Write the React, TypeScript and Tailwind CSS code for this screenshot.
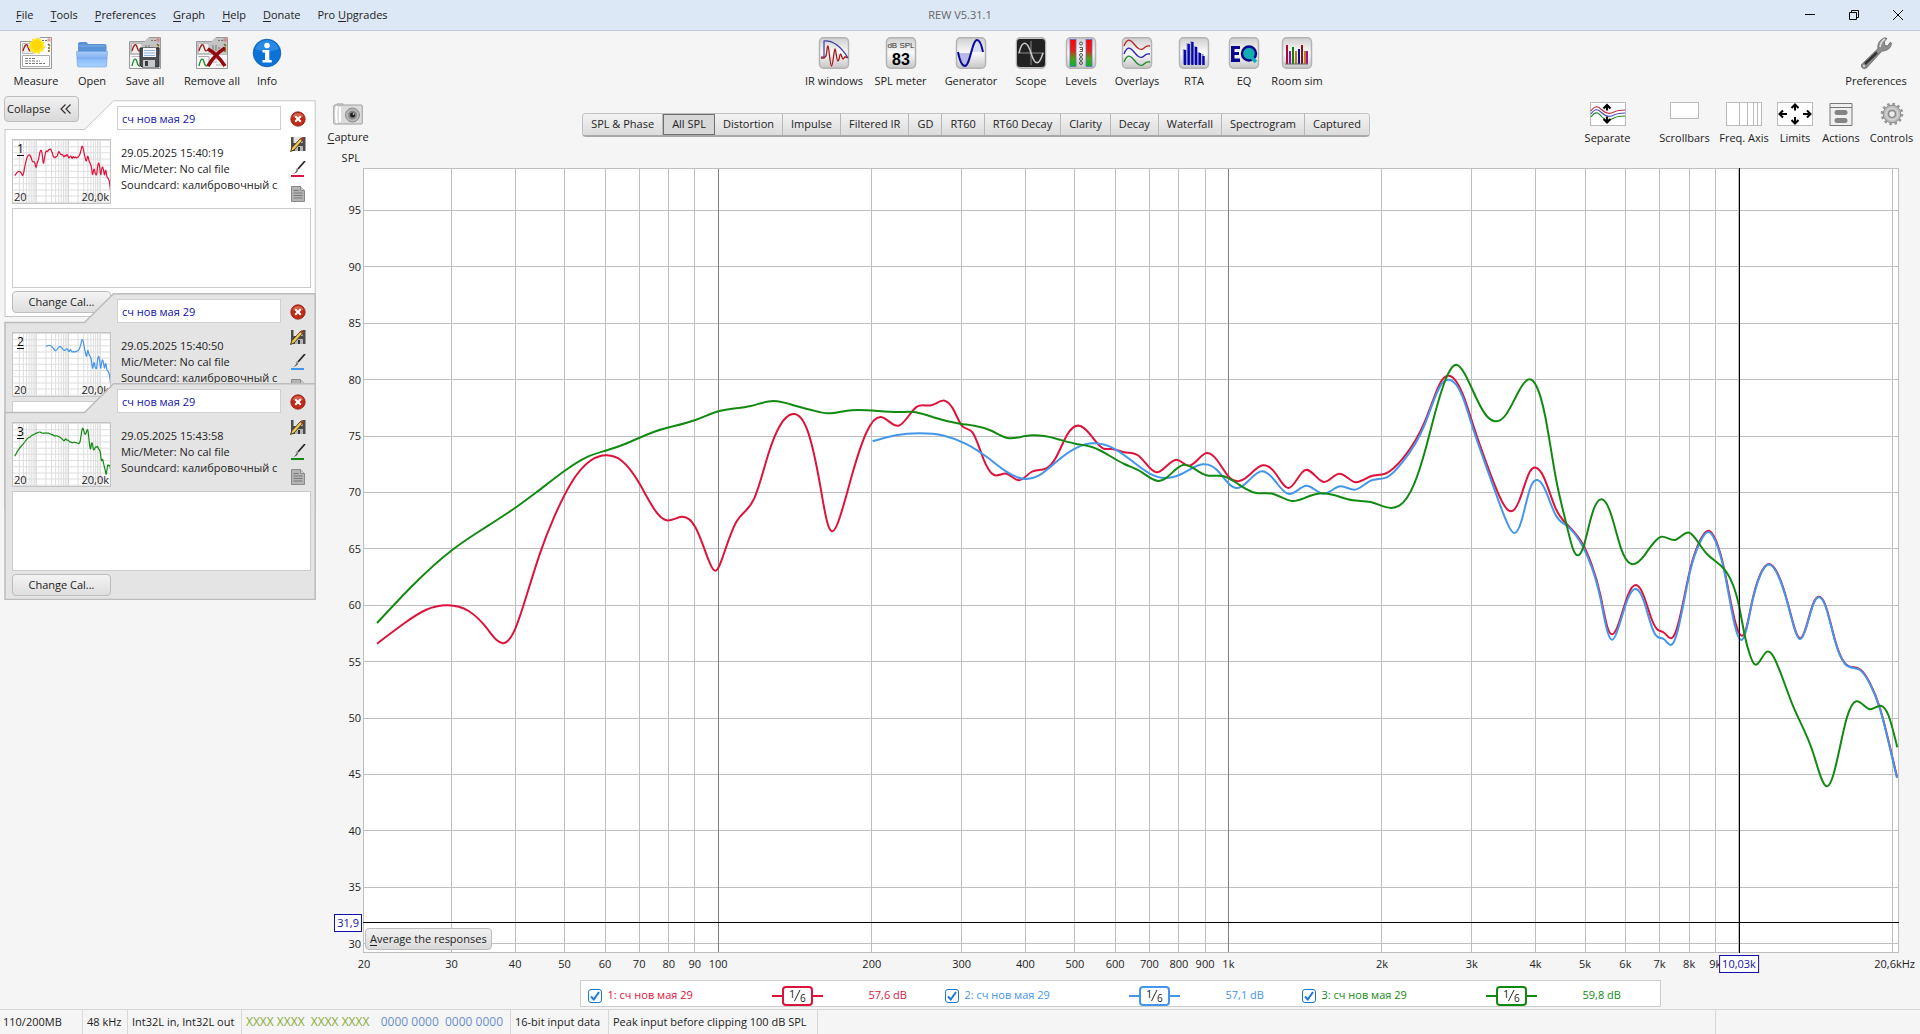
import React, { useState } from 'react';

const RED = '#dc143c';
const BLUE = '#4496ea';
const GREEN = '#128a12';

// the plot canvas the curves were laid out on
const PLOT = { x: 363, y: 168, w: 1536, h: 785 };

const fx = (hz: number) => 718.2 + 510.2 * (Math.log10(hz) - 2);
const dy = (db: number) => 210.4 + (95 - db) * 11.28;

// smoothed responses as x,y pairs on the plot canvas
const redCurve = '377,643.7 404.3,623.3 425.7,610 447.9,605.3 468.6,611 486.4,627.7 504.3,643 515.4,628.3 525.7,598.3 540,553.3 554.3,516.7 572,481.7 590,461 606.8,455.3 622,461 639.3,483.3 656,511.7 666.4,520.3 681.8,516.7 695.4,527.3 707.9,558.3 715.4,570.7 724,553.3 736.4,521.7 754.3,498.3 768.6,453.3 779.3,426.7 792.9,414 807.9,431.7 820.4,486.7 827.5,523.3 832,531.3 840,516.7 852.5,473.3 866.8,431.7 881,417 898.6,425.7 917,406.7 931.4,405.3 944.6,400.7 954.6,411.7 961.8,425.7 972.5,432.3 983.2,458.3 994,475 1006.4,473.7 1019,480.3 1031.4,472 1045.7,468.7 1056.4,456.7 1067,435 1080.4,426 1092,436.7 1102.9,448.3 1111.8,449 1124.3,452.3 1138.6,455.7 1156.4,472.3 1176.8,459.7 1189,465.7 1206.4,453 1217,460 1229.6,477.7 1239.3,481 1249.3,475 1262.5,465.3 1276,474 1288.6,488 1304.6,470.3 1324,482 1339,473.7 1354.6,482 1370.7,476.3 1385,473.7 1402.9,458.3 1424.8,421.7 1435,395 1442,380 1448.9,375.7 1456.4,381.7 1464.4,398.3 1472.6,423.3 1490.2,473.3 1504,505 1510.9,511.3 1519.5,500 1529.8,471.7 1536,467.7 1543.6,476.7 1555.6,508.3 1566.6,524 1583.2,545 1591.8,565 1600.4,595 1607.3,626.7 1612.4,634.3 1619.3,621.7 1628,595 1636.2,585 1643.4,595 1652,620 1657.2,629.3 1664,632.7 1672,638 1677.9,625 1690,570 1700.3,540 1708.2,530.7 1715.7,540 1724.4,570 1734.7,620 1741.5,635.6 1745.7,630 1751.7,603.3 1760,575 1769,564 1778.3,575 1788.3,605 1795,629.3 1800,638.3 1806.7,625 1813.3,603.3 1818.7,596.7 1825,604 1835,640 1845,663.3 1860,669.3 1870,683.3 1880,708.3 1888.3,740 1897,776.7';

const blueCurve = '872.5,441.3 895.7,435.3 919,433.3 944,435.7 967,444.3 988.6,458.3 1006.4,471.7 1025.4,479 1038.6,475.7 1056.4,461.7 1075.4,448.3 1094,443.3 1115.4,449.3 1135,463.3 1149.3,473.3 1165.4,478 1181.4,474 1202.9,464.3 1217,470 1227.9,482.7 1236.8,488 1247.5,481.7 1262,471.3 1274.3,480 1288.6,494 1306.4,485.7 1323,493.7 1340.4,486.3 1354.6,489.7 1370.7,480.7 1386.8,477.3 1402.9,461.7 1424.8,424.3 1435,397.3 1442,383.3 1448.9,379.7 1456.4,385 1464.4,401.7 1472.6,427.3 1483.3,458.3 1497,496.7 1507.4,523.3 1514.3,533 1521.2,521.7 1530.8,486.7 1537.4,480 1545.3,490 1555.6,515 1566.6,525.7 1583.2,547.3 1591.8,567.3 1600.4,598.3 1607.3,631 1612.4,639.7 1619.3,625 1628,598.3 1636.2,589 1643.4,600 1652,627.3 1656.5,636 1664,639.3 1671.7,644.7 1677.9,630 1690,571.7 1700.3,541.7 1708.2,532 1715.7,541.7 1724.4,571.7 1734.7,625 1741,640 1745.7,632 1751.7,604.3 1760,576 1769,564.6 1778.3,576 1788.3,606 1795,630.3 1800,639.3 1806.7,626 1813.3,604.3 1818.7,597.3 1825,605 1835,641 1845,664 1860,670 1870,684 1880,709 1888.3,741 1897,778';

const greenCurve = '377,623 411.4,586.7 452.5,549.7 482.9,529 515.4,507.7 536.4,492.3 565.4,470.3 586.4,457.3 605.4,450.7 625.7,443.7 654.3,431.7 669.3,427.3 695.4,420 718.6,411.3 750.7,406 773.2,401 797,406.3 811.4,410 828.2,413.3 847,410.7 857.9,410 900,412 913.6,412 935,417.7 960,423.7 974.3,425.7 992,431 1007.5,438 1025.4,436 1056.4,438.7 1075.4,443.7 1092,447 1124.3,464 1142,472.3 1159,481 1167,477.3 1184,464.7 1192,467.3 1206.4,475.3 1222.5,476 1238.6,484.3 1256.4,493 1272.5,493.7 1292,501 1306.4,497.3 1322.5,493.3 1353,500.3 1370.7,502 1391,508 1399.3,505.7 1414.4,483.3 1424.8,451.7 1435,413.3 1445.4,380 1456.4,364.7 1464.4,373.3 1476.4,398.3 1486.7,416 1495.4,421.3 1505.7,415 1517.7,393.3 1529.4,379.3 1536.7,386.7 1545.3,416.7 1555.6,476.7 1566.6,525 1572.8,548.3 1578.3,555.3 1583.2,547.3 1591.8,515 1601.8,499.3 1610.7,513.3 1621,548.3 1630.7,563.7 1645.2,554.3 1661.3,536.7 1675,540 1689.2,532.7 1698.5,542.7 1707,554 1724.4,569.3 1733,585 1739.2,606.7 1745,636.7 1750,655 1754,663.7 1767,651.7 1776.7,663.3 1793.3,706.7 1813.3,753.3 1827.3,786.3 1833.3,775 1846.7,718.3 1856.3,701.3 1870,709.3 1881,705.7 1888.3,715 1897.3,747.3';

// natural cubic spline through the points, written as bezier segments
const toPath = (s: string) => {
  const p = s.split(' ').map((t) => t.split(',').map(Number));
  const n = p.length;
  const h = p.slice(1).map((q, i) => q[0] - p[i][0]);
  const g = p.slice(1).map((q, i) => (q[1] - p[i][1]) / h[i]);
  // second derivatives, tridiagonal solve
  const c = new Array(n).fill(0);
  const r = new Array(n).fill(0);
  for (let i = 1; i < n - 1; i++) {
    const den = 2 * (h[i - 1] + h[i]) - h[i - 1] * c[i - 1];
    c[i] = h[i] / den;
    r[i] = (6 * (g[i] - g[i - 1]) - h[i - 1] * r[i - 1]) / den;
  }
  const z = new Array(n).fill(0);
  for (let i = n - 2; i > 0; i--) z[i] = r[i] - c[i] * z[i + 1];
  let d = `M${p[0][0]},${p[0][1]}`;
  for (let i = 0; i < n - 1; i++) {
    const m0 = g[i] - (h[i] * (2 * z[i] + z[i + 1])) / 6;
    const m1 = g[i] + (h[i] * (z[i] + 2 * z[i + 1])) / 6;
    const k = h[i] / 3;
    d += `C${p[i][0] + k},${p[i][1] + m0 * k} ${p[i + 1][0] - k},${p[i + 1][1] - m1 * k} ${p[i + 1][0]},${p[i + 1][1]}`;
  }
  return d;
};

const traces = [
  { id: 1, name: 'сч нов мая 29', time: '29.05.2025 15:40:19', level: '57,6 dB', color: RED, path: toPath(redCurve) },
  { id: 2, name: 'сч нов мая 29', time: '29.05.2025 15:40:50', level: '57,1 dB', color: BLUE, path: toPath(blueCurve) },
  { id: 3, name: 'сч нов мая 29', time: '29.05.2025 15:43:58', level: '59,8 dB', color: GREEN, path: toPath(greenCurve) },
];

const freqs = [30, 40, 50, 60, 70, 80, 90, 100, 200, 300, 400, 500, 600, 700, 800, 900, 1000, 2000, 3000, 4000, 5000, 6000, 7000, 8000, 9000, 10000, 20000];
const levels = [95, 90, 85, 80, 75, 70, 65, 60, 55, 50, 45, 40, 35, 30];

const Grid = ({ color, strong }: { color: string; strong: string }) => (
  <g shapeRendering="crispEdges" fill="none">
    {levels.map((l) => (
      <path key={l} d={`M300 ${dy(l)}H1899`} stroke={color} vectorEffect="non-scaling-stroke" />
    ))}
    {freqs.map((f) => (
      <path key={f} d={`M${fx(f)} 168V953`} stroke={f === 100 || f === 1000 ? strong : color} vectorEffect="non-scaling-stroke" />
    ))}
  </g>
);

/* ---------- toolbar icons ---------- */

const Tile = ({ children }: { children: React.ReactNode }) => (
  <svg width="32" height="32" viewBox="0 0 32 32" fill="none">
    <defs>
      <linearGradient id="tile" x1="0" y1="0" x2="0" y2="1">
        <stop offset="0" stopColor="#cfcfcf" />
        <stop offset=".5" stopColor="#fafafa" />
        <stop offset="1" stopColor="#c6c6c6" />
      </linearGradient>
    </defs>
    <rect x="1.5" y=".75" width="29" height="30.5" rx="4" fill="url(#tile)" stroke="#b4b4b4" strokeWidth="1.5" />
    {children}
  </svg>
);

const FolderPage = ({ shade, children }: { shade: string; children: React.ReactNode }) => (
  <svg width="32" height="32" viewBox="0 0 32 32" fill="none">
    <path d="M.5 31.5V4.500H16L20 .5H31.500V31.500Z" fill="#f7f7f7" stroke="#999" />
    <path d="M1 5H16L20 1H31V18H1Z" fill={shade} />
    <path d="M2.500 6.500H13V16.500H2.500Z" fill="#eee" stroke="#bbb" />
    <path d="M3 14C5 7 7 6 8 10S10 16 13 11" stroke="#a51c1c" strokeWidth="1.3" />
    <path d="M16 9h5M16 11h8M16 13h6M22 3.500h5" stroke="#777" strokeDasharray="2 1" />
    <rect x="28" y="2" width="2" height="2" stroke="#d66" strokeWidth=".8" />
    <path d="M28 7l2 2M28 14h2M28 11h2" stroke="#7a6500" strokeWidth="1.5" />
    {children}
  </svg>
);

const MeasureIcon = () => (
  <FolderPage shade="#fafafa">
    <path d="M2.500 18.500H29.500V29.500H2.500Z" fill="#fff" stroke="#aaa" />
    <path d="M5 21.500h11M5 24h15M5 26.500h20" stroke="#777" strokeDasharray="3 1 2 1" />
    <path d="M16.500 0l1.800 2.600 3-1.200.3 3.200 3.100.5-1.400 2.800 2.300 2.100-2.800 1.500.7 3.100-3.200-.2-1.300 2.900-2.500-1.900-2.500 1.900-1-3-3.200.2.800-3.100L7.800 10l2.400-2.100L8.900 5l3.200-.5.2-3.200 3 1.300Z" fill="#ffe51a" />
    <circle cx="16.500" cy="8" r="5.200" fill="#ffd700" />
  </FolderPage>
);

const OpenIcon = () => (
  <svg width="32" height="32" viewBox="0 0 32 32">
    <defs>
      <linearGradient id="folder" x1="0" y1="0" x2="0" y2="1">
        <stop offset="0" stopColor="#a9ccf8" />
        <stop offset=".45" stopColor="#7fb0f0" />
        <stop offset=".55" stopColor="#8fc0fa" />
        <stop offset="1" stopColor="#a8d2ff" />
      </linearGradient>
    </defs>
    <path d="M2 15V7q0-2 2-2h6q1 0 2 2h17q1.500 0 1.500 1.500V16Z" fill="#5c93d6" />
    <path d="M3 9h26" stroke="#7eaee6" />
    <path d="M.5 14.500h31L30.500 29q0 1-1.500 1H3q-1.500 0-1.500-1Z" fill="url(#folder)" stroke="#6d9fe0" strokeWidth=".6" />
  </svg>
);

const SaveAllIcon = () => (
  <FolderPage shade="#c4c4c4">
    <path d="M2.500 19.500H13V30" stroke="#bbb" />
    <path d="M3 29C5 20 7 21 8 25s2 5 5 3" stroke="#178a2b" strokeWidth="1.300" />
    <path d="M11 11h19v19H13l-2-2Z" fill="#4a4c50" stroke="#2d2d2d" />
    <rect x="14" y="11" width="13" height="9" fill="#f3f6fa" />
    <path d="M15 13.500h11M15 16h11M15 18.500h11" stroke="#8fb0d8" />
    <rect x="14" y="23" width="12" height="7" fill="#c5c8cc" />
    <rect x="16" y="24" width="3" height="5" fill="#3a3c40" />
  </FolderPage>
);

const RemoveAllIcon = () => (
  <FolderPage shade="#c4c4c4">
    <path d="M2.500 19.500H13V30M18 22h8M17 25h4M20 28h6" stroke="#aaa" />
    <path d="M3 29C5 20 7 21 8 25s2 5 5 3" stroke="#178a2b" strokeWidth="1.300" />
    <path d="M12 12q9 5 17 17M29 11q-10 6-17 18" stroke="#96090f" strokeWidth="3.600" />
  </FolderPage>
);

const InfoIcon = () => (
  <svg width="32" height="32" viewBox="0 0 32 32">
    <circle cx="16" cy="16" r="13.800" fill="#0b72d8" stroke="#0558ad" strokeWidth=".8" />
    <path d="M4 12a12.500 12.500 0 0 1 24 0q-12 5-24 0" fill="#3c9bee" opacity=".6" />
    <circle cx="16" cy="8.500" r="2.800" fill="#fff" />
    <path d="M11.500 13h6.800v10h2.400v2.600h-9.200V23h2.500v-7.400h-2.500Z" fill="#fff" />
  </svg>
);

const IrIcon = () => (
  <Tile>
    <path d="M3 20h3V4q13-1 24 17" stroke="#3a3aa8" strokeWidth="1.200" />
    <path d="M3 21h3l2-2c1-4 1-10 2-10s2 20 3.500 20S16 12 17 12s1.500 12 3 12 1.500-7 2.500-7 1.500 5 2.500 5 1.500-3 2.500-2l2 1" stroke="#a01818" strokeWidth="1.300" />
  </Tile>
);

const SplIcon = () => (
  <Tile>
    <text x="16" y="11" textAnchor="middle" fontSize="8" fontFamily="Liberation Sans" fill="#333">dB SPL</text>
    <text x="16" y="28" textAnchor="middle" fontSize="16" fontWeight="700" fontFamily="Liberation Sans" fill="#000">83</text>
  </Tile>
);

const GeneratorIcon = () => (
  <Tile>
    <path d="M3 16h13C14 24 12 29 10 29S5 25 3 16Z" fill="#b9b9e6" />
    <path d="M16 15C18 8 20 3 22 3s4 4 6 12Z" fill="#dcdcf4" />
    <path d="M3 15C5 25 7 29 10 29 15 29 17 3 22 3c3 0 5 7 6 12" stroke="#0a0a9a" strokeWidth="2" />
  </Tile>
);

const ScopeIcon = () => (
  <Tile>
    <rect x="2" y="2" width="28" height="28" rx="3" fill="#222" />
    <path d="M3 16h26M16 4v24" stroke="#8a8a8a" />
    <path d="M4 16C7 3 12 3 16 16s8 13 12 0" stroke="#ccc" strokeWidth="1.500" />
  </Tile>
);

const LevelsIcon = () => (
  <Tile>
    <defs>
      <linearGradient id="level" x1="0" y1="0" x2="0" y2="1">
        <stop offset="0" stopColor="#f00" />
        <stop offset=".4" stopColor="#e82018" />
        <stop offset=".7" stopColor="#50a010" />
        <stop offset="1" stopColor="#00b828" />
      </linearGradient>
    </defs>
    <rect x="5" y="2.500" width="6" height="27" fill="url(#level)" stroke="#6a6ac0" strokeWidth=".8" />
    <rect x="21" y="2.500" width="6" height="27" fill="url(#level)" stroke="#6a6ac0" strokeWidth=".8" />
    <g stroke="#444" strokeWidth=".9">
      <circle cx="16" cy="6.500" r="1.500" />
      <path d="M14.500 10.500h3v4h-3M15 12.500h2" />
      <circle cx="16" cy="18" r="1.500" />
      <circle cx="16" cy="22" r="1.500" />
      <circle cx="16" cy="26" r="1.500" />
    </g>
  </Tile>
);

const OverlaysIcon = () => (
  <Tile>
    <g strokeWidth="1.300">
      <path d="M3 9C6 1 9 2 13 7s7 7 10 4 4-2 6-2" stroke="#b82525" />
      <path d="M3 17c3-8 6-7 10-2s7 7 10 4 4-2 6-2" stroke="#2323b0" />
      <path d="M3 25c3-8 6-7 10-2s7 7 10 4 4-2 6-2" stroke="#1f8a2a" />
    </g>
  </Tile>
);

const RtaIcon = () => (
  <Tile>
    <path d="M7 28V13M10.700 28V7M14.400 28V5M18.100 28V10M21.800 28V16M25.500 28V18" stroke="#9c9cdd" strokeWidth="2.400" transform="translate(-1 -1)" />
    <path d="M7 28V13M10.700 28V7M14.400 28V5M18.100 28V10M21.800 28V16M25.500 28V19" stroke="#0808a8" strokeWidth="2.400" />
  </Tile>
);

const EqIcon = () => (
  <Tile>
    <path d="M3 9h9v3H6.500v3H11v3H6.500v3.500H12V25H3Z" fill="#08088c" />
    <circle cx="21" cy="16.500" r="7" fill="#12aeb4" stroke="#08088c" strokeWidth="2.500" />
    <path d="M22 19l6 6" stroke="#12aeb4" strokeWidth="3.500" />
  </Tile>
);

const RoomIcon = () => (
  <Tile>
    <g strokeWidth="2">
      <path d="M6 27V8" stroke="#a01030" />
      <path d="M9 27V14" stroke="#a010a0" />
      <path d="M12 27V10" stroke="#108010" />
      <path d="M15 27V14" stroke="#b08010" />
      <path d="M18 27V12" stroke="#1010a0" />
      <path d="M21 27V8" stroke="#901010" />
      <path d="M24 27V14" stroke="#c08010" />
      <path d="M26 27V14" stroke="#a010a0" />
    </g>
    <path d="M4 27h23" stroke="#666" />
  </Tile>
);

const WrenchIcon = () => (
  <svg width="32" height="32" viewBox="0 0 32 32">
    <path d="M1.500 27.500L18 11.500C17 7 20 2 25 .8L27 1.500 24.500 4.500V8l3 1L30.500 5l1 1.500C31 11 27.500 14 22 14L6.500 31Q3 33 1.500 30Z" fill="#8d8d8d" stroke="#5b5b5b" strokeWidth=".7" />
    <path d="M5 27L17 15.500" stroke="#333" strokeWidth="2.500" />
    <path d="M20 10q1-6 5-8" stroke="#dedede" strokeWidth="1.600" fill="none" />
    <circle cx="4" cy="29" r="1.400" fill="#f5f5f5" stroke="#666" strokeWidth=".6" />
  </svg>
);

const CameraIcon = () => (
  <svg width="30" height="22" viewBox="0 0 30 22">
    <rect x="4" y="0" width="6" height="3" rx="1" fill="#d5d5d5" stroke="#aaa" strokeWidth=".6" />
    <rect x=".75" y="2" width="28.500" height="19" rx="1" fill="#dcdcdc" stroke="#9d9d9d" />
    <path d="M4 3q-2 9 0 17M7 4v15" stroke="#fff" strokeWidth="2" fill="none" />
    <circle cx="19.500" cy="12" r="7" fill="#b7b7b7" stroke="#8a8a8a" />
    <circle cx="19.500" cy="12" r="4.500" fill="#8a8a8a" />
    <circle cx="19.500" cy="12" r="2.500" fill="#222" />
    <circle cx="20.500" cy="11" r=".8" fill="#fff" />
  </svg>
);

const SeparateIcon = () => (
  <svg width="36" height="24" viewBox="0 0 36 24" fill="none">
    <rect x=".5" y=".5" width="35" height="23" fill="#fff" stroke="#bbb" />
    <path d="M1 9c4-6 7-5 11-1s8 4 12 2 7-2 11-2" stroke="#c03040" strokeWidth="1.200" />
    <path d="M1 12c4-6 7-5 11-1s8 4 12 2 7-2 11-2" stroke="#5050c0" strokeWidth="1.200" />
    <path d="M1 15c4-6 7-5 11 0s8 3 12 1 7-2 11-2" stroke="#209030" strokeWidth="1.200" />
    <path d="M17 8.500V3M13.500 6.500L17 3l3.500 3.500M17 14.500v6M13.500 17l3.500 3.500 3.500-3.500" stroke="#000" strokeWidth="2.200" />
  </svg>
);

const ScrollbarsIcon = () => (
  <svg width="30" height="24" viewBox="0 0 30 24">
    <rect x=".5" y=".5" width="28" height="16" fill="#fff" stroke="#bbb" />
  </svg>
);

const FreqAxisIcon = () => (
  <svg width="36" height="24" viewBox="0 0 36 24" shapeRendering="crispEdges">
    <path d="M.5 .5h35v23h-35ZM13.500 1v22M21.500 1v22M27.500 1v22M31.500 1v22" fill="#fff" stroke="#bbb" />
  </svg>
);

const LimitsIcon = () => (
  <svg width="36" height="24" viewBox="0 0 36 24" fill="none">
    <rect x=".5" y=".5" width="35" height="23" fill="#fff" stroke="#bbb" />
    <path d="M18 8.500V3M14.500 6L18 2.500 21.500 6M18 15v6M14.500 18l3.500 3.500 3.500-3.500M10 12H3M6 8.500L2.500 12 6 15.500M26 12h7M30 8.500l3.500 3.500-3.500 3.500" stroke="#000" strokeWidth="2" />
  </svg>
);

const ActionsIcon = () => (
  <svg width="24" height="24" viewBox="0 0 24 24">
    <path d="M1 1.500h22v22H1ZM1 5.500h22" fill="#f0f0f0" stroke="#777" />
    <rect x="5.500" y="8" width="13" height="5" rx="2.500" fill="#858585" />
    <rect x="5.500" y="16" width="13" height="5" rx="2.500" fill="#858585" />
  </svg>
);

const ControlsIcon = () => (
  <svg width="24" height="24" viewBox="0 0 24 24" fill="none">
    <circle cx="12" cy="12" r="10" stroke="#999" strokeWidth="2.600" strokeDasharray="2.600 2.640" />
    <circle cx="12" cy="12" r="8.800" fill="#bdbdbd" stroke="#8c8c8c" />
    <circle cx="12" cy="12" r="6" stroke="#dedede" />
    <circle cx="12" cy="12" r="3.400" fill="#ededed" stroke="#888" strokeWidth="1.400" />
  </svg>
);

/* ---------- measurement card icons ---------- */

const DeleteIcon = () => (
  <svg width="16" height="16" viewBox="0 0 16 16">
    <circle cx="8" cy="8" r="7.200" fill="#c22a18" stroke="#8c1a10" strokeWidth=".8" />
    <path d="M2.500 5.500a6 6 0 0 1 11 0q-5.500 2-11 0" fill="#e88070" opacity=".6" />
    <path d="M5.200 5.200l5.600 5.600M10.800 5.200l-5.600 5.600" stroke="#fff" strokeWidth="2" />
  </svg>
);

const SaveIcon = () => (
  <svg width="16" height="16" viewBox="0 0 16 16">
    <path d="M1 1h14.500v14H1Z" fill="#4c4c4c" />
    <path d="M3.500 1h9v6h-9Z" fill="#e4e4e4" />
    <path d="M5 10h8v5H5Z" fill="#b5b5b5" />
    <path d="M8 11h2v4H8Z" fill="#333" />
    <path d="M.5 15.500L2 11.500 11 2l2 2-9 10Z" fill="#f0cb55" stroke="#3c3010" strokeWidth=".9" />
    <path d="M10 3l2-2 2 2-2 2Z" fill="#a33d20" />
  </svg>
);

const PenIcon = ({ color }: { color: string }) => (
  <svg width="16" height="16" viewBox="0 0 16 16">
    <path d="M15 0L8 8" stroke="#222" strokeWidth="1.700" />
    <path d="M8 7.500L6.500 9.500" stroke="#999" strokeWidth="2.200" />
    <path d="M7 9l1 1q-2 3-5 3 2-1 4-4" fill="#555" />
    <path d="M1 15h13" stroke={color} strokeWidth="2" />
  </svg>
);

const NotesIcon = () => (
  <svg width="16" height="16" viewBox="0 0 16 16">
    <path d="M1.500.5h9l4 4v11h-13Z" fill="#b4b4b4" stroke="#8a8a8a" />
    <path d="M10.500.5v4h4" fill="#d4d4d4" stroke="#8a8a8a" />
    <path d="M3.500 4.500h5M3.500 7h9M3.500 9.500h9M3.500 12h9" stroke="#7a7a7a" />
  </svg>
);

const ToolButton = ({ icon, label, width }: { icon: React.ReactNode; label: string; width: string }) => (
  <button className={`flex shrink-0 flex-col items-center whitespace-nowrap ${width}`}>
    {icon}
    <span className="mt-1 leading-4">{label}</span>
  </button>
);

const MeasurementCard = ({ trace, active, overlap }: { trace: (typeof traces)[0]; active: boolean; overlap: string }) => {
  const [name, setName] = useState(trace.name);
  return (
    <section className={`relative w-[312px] shrink-0 pb-1 pl-2 ${overlap}`}>
      {/* folder outline with the slanted tab */}
      <svg className="absolute inset-0 size-full" viewBox="0 0 312 217" preserveAspectRatio="none">
        <path
          d="M1 216.500V29.500H80.500L109.500 .800H311.200V216.500Z"
          fill={active ? '#ffffff' : '#e4e4e4'}
          stroke={active ? '#c6c6c6' : '#bcbcbc'}
          strokeWidth={active ? 1 : 1.5}
        />
      </svg>
      <div className="relative flex h-[104px]">
        <div className="relative mt-[39px] h-[65px] w-[99px] shrink-0 overflow-hidden border border-[#c4c4c4] bg-white">
          <svg className="absolute inset-0 size-full" viewBox="350 319 1538 575" preserveAspectRatio="none">
            <Grid color="#dedede" strong="#d2d2d2" />
            <path d={trace.path} fill="none" stroke={trace.color} vectorEffect="non-scaling-stroke" strokeWidth="1.2" />
          </svg>
          <span className="absolute left-1 top-px text-xs leading-4 text-black underline underline-offset-2">{trace.id}</span>
          <span className="absolute bottom-0 left-px leading-3">20</span>
          <span className="absolute bottom-0 right-px leading-3">20,0k</span>
        </div>
        <div className="ml-1.5 w-[164px] shrink-0 overflow-hidden pt-1.5">
          <input
            aria-label={`Name ${trace.id}`}
            value={name}
            onChange={(e) => setName(e.target.value)}
            className="block h-6 w-full border border-[#d0d0d0] bg-white px-1 text-[#1010b0] outline-none"
          />
          <div className="mt-[15px] whitespace-nowrap pl-1 leading-4">
            <p>{trace.time}</p>
            <p>Mic/Meter: No cal file</p>
            <p>Soundcard: калибровочный с</p>
          </div>
        </div>
        <div className="flex w-[34px] flex-col items-center gap-[9px] pt-[11px]">
          <button aria-label="Delete"><DeleteIcon /></button>
          <button aria-label="Save"><SaveIcon /></button>
          <button aria-label="Trace colour"><PenIcon color={trace.color} /></button>
          <button aria-label="Notes"><NotesIcon /></button>
        </div>
      </div>
      <textarea
        aria-label={`Notes ${trace.id}`}
        className="relative mt-1 block h-20 w-[299px] resize-none border border-[#cccccc] bg-white p-1 outline-none"
      />
      <button className="relative mt-[3px] block h-[22px] w-[99px] rounded border border-[#bdbdbd] bg-gradient-to-b from-[#f4f4f4] to-[#dedede]">
        Change Cal...
      </button>
    </section>
  );
};

const LegendItem = ({ trace }: { trace: (typeof traces)[0] }) => {
  const [on, setOn] = useState(true);
  return (
    <div className="flex w-[357px] items-center" style={{ color: trace.color }}>
      <label className="flex w-[184px] items-center gap-1.5">
        <span className="relative size-[14px]">
          <input
            type="checkbox"
            checked={on}
            onChange={() => setOn(!on)}
            className="block size-[14px] appearance-none rounded-[3px] border border-[#1b78c8] bg-white"
          />
          {on && (
            <svg className="pointer-events-none absolute inset-0" width="14" height="14" viewBox="0 0 14 14" fill="none">
              <path d="M3 7.500l2.800 3L11 3" stroke="#1b78d8" strokeWidth="2" />
            </svg>
          )}
        </span>
        {trace.id}: {trace.name}
      </label>
      <button aria-label="Smoothing" className="h-[22px] w-[51px]">
        <svg width="51" height="22" viewBox="0 0 51 22" fill="none">
          <path d="M0 11h51" stroke={trace.color} strokeWidth="2" />
          <rect x="11" y="2" width="29" height="18" rx="3" fill="#fff" stroke={trace.color} strokeWidth="2" />
          <path d="M22.500 16L28 5" stroke="#222" />
          <text x="17" y="13" fontSize="11" fontFamily="Open Sans" fill="#222">1</text>
          <text x="28" y="17" fontSize="10" fontFamily="Open Sans" fill="#222">6</text>
        </svg>
      </button>
      <span className="ml-[46px]">{trace.level}</span>
    </div>
  );
};

const axisText = (f: number) => (f >= 1000 ? `${f / 1000}k` : `${f}`);

const tabs = ['SPL & Phase', 'All SPL', 'Distortion', 'Impulse', 'Filtered IR', 'GD', 'RT60', 'RT60 Decay', 'Clarity', 'Decay', 'Waterfall', 'Spectrogram', 'Captured'];

const menus = [
  ['', 'F', 'ile'],
  ['', 'T', 'ools'],
  ['', 'P', 'references'],
  ['', 'G', 'raph'],
  ['', 'H', 'elp'],
  ['', 'D', 'onate'],
  ['Pro ', 'U', 'pgrades'],
];

const left = (x: number) => ({ left: `${((x - PLOT.x) / PLOT.w) * 100}%` });
const top = (y: number) => ({ top: `${((y - PLOT.y) / PLOT.h) * 100}%` });

const App: React.FC = () => {
  const [tab, setTab] = useState('All SPL');

  return (
    <div className="flex h-screen flex-col overflow-hidden bg-[#f5f5f5] font-['Open_Sans','Noto_Sans',sans-serif] text-[11px] text-[#222]">
      {/* title bar */}
      <header className="relative flex h-[31px] shrink-0 items-center border-b border-[#bccbdc] bg-[#dce8f5]">
        <nav className="flex gap-[17px] pl-4">
          {menus.map(([pre, key, rest]) => (
            <button key={rest} className="whitespace-pre">
              {pre}
              <u className="underline-offset-2">{key}</u>
              {rest}
            </button>
          ))}
        </nav>
        <h1 className="absolute left-1/2 -translate-x-1/2 text-[#666]">REW V5.31.1</h1>
        <div className="ml-auto flex">
          <button aria-label="Minimize" className="flex h-[30px] w-[44px] items-center justify-center">
            <svg width="10" height="10"><path d="M0 4.500h10" stroke="#000" /></svg>
          </button>
          <button aria-label="Restore" className="flex h-[30px] w-[44px] items-center justify-center">
            <svg width="10" height="10" fill="none"><path d="M.5 2.500h7v7h-7ZM2.500 2.500v-2h7v7h-2" stroke="#000" /></svg>
          </button>
          <button aria-label="Close" className="flex h-[30px] w-[44px] items-center justify-center">
            <svg width="10" height="10"><path d="M0 0l10 10M10 0L0 10" stroke="#000" /></svg>
          </button>
        </div>
      </header>

      {/* main toolbar */}
      <div className="flex h-[61px] shrink-0 justify-between pl-[5px] pr-2 pt-1.5">
        <div className="flex pr-1.5">
          <ToolButton icon={<MeasureIcon />} label="Measure" width="w-[62px]" />
          <ToolButton icon={<OpenIcon />} label="Open" width="w-[50px]" />
          <ToolButton icon={<SaveAllIcon />} label="Save all" width="w-[56px]" />
          <ToolButton icon={<RemoveAllIcon />} label="Remove all" width="w-[78px]" />
          <ToolButton icon={<InfoIcon />} label="Info" width="w-[32px]" />
        </div>
        <div className="flex">
          <ToolButton icon={<IrIcon />} label="IR windows" width="w-[64px]" />
          <ToolButton icon={<SplIcon />} label="SPL meter" width="w-[69px]" />
          <ToolButton icon={<GeneratorIcon />} label="Generator" width="w-[72px]" />
          <ToolButton icon={<ScopeIcon />} label="Scope" width="w-[48px]" />
          <ToolButton icon={<LevelsIcon />} label="Levels" width="w-[52px]" />
          <ToolButton icon={<OverlaysIcon />} label="Overlays" width="w-[60px]" />
          <ToolButton icon={<RtaIcon />} label="RTA" width="w-[54px]" />
          <ToolButton icon={<EqIcon />} label="EQ" width="w-[46px]" />
          <ToolButton icon={<RoomIcon />} label="Room sim" width="w-[60px]" />
        </div>
        <ToolButton icon={<WrenchIcon />} label="Preferences" width="w-[72px]" />
      </div>

      <div className="flex min-h-0 flex-1">
        {/* measurements */}
        <aside className="relative flex w-80 shrink-0 flex-col overflow-hidden pl-1 pt-2">
          <MeasurementCard trace={traces[0]} active overlap="" />
          <MeasurementCard trace={traces[1]} active={false} overlap="-mt-6" />
          <MeasurementCard trace={traces[2]} active={false} overlap="-mt-[127px]" />
          <button className="absolute left-1 top-1 flex h-[26px] w-[75px] items-center justify-between rounded border border-[#bdbdbd] bg-gradient-to-b from-[#f2f2f2] to-[#d9d9d9] pl-0.5 pr-1.5">
            Collapse
            <svg width="12" height="10" viewBox="0 0 12 10" fill="none">
              <path d="M5.500 .5L1 5l4.500 4.500M10.500 .5L6 5l4.500 4.500" stroke="#333" strokeWidth="1.200" />
            </svg>
          </button>
        </aside>

        <main className="flex min-w-0 flex-1 flex-col">
          <div className="relative flex h-14 shrink-0 items-start justify-between pr-px pt-2.5">
            <button className="mt-px flex w-14 flex-col items-center">
              <CameraIcon />
              <span className="mt-1 leading-4">
                <u className="underline-offset-2">C</u>apture
              </span>
            </button>
            <div className="flex">
              <ToolButton icon={<SeparateIcon />} label="Separate" width="w-[91px]" />
              <ToolButton icon={<ScrollbarsIcon />} label="Scrollbars" width="w-[63px]" />
              <ToolButton icon={<FreqAxisIcon />} label="Freq. Axis" width="w-[56px]" />
              <ToolButton icon={<LimitsIcon />} label="Limits" width="w-[46px]" />
              <ToolButton icon={<ActionsIcon />} label="Actions" width="w-[46px]" />
              <ToolButton icon={<ControlsIcon />} label="Controls" width="w-[55px]" />
            </div>
            <div className="absolute inset-x-0 top-[21px] mx-auto flex w-max" role="tablist">
              <div className="mr-[288px] flex h-6 overflow-hidden rounded border border-b-2 border-[#c0c0c0] border-b-[#a8a8a8]">
                {tabs.map((t) => (
                  <button
                    key={t}
                    role="tab"
                    aria-selected={t === tab}
                    onClick={() => setTab(t)}
                    className={
                      t === tab
                        ? 'border border-[#707070] bg-[#d8d8d8] px-2'
                        : 'border-r border-[#b8b8b8] bg-gradient-to-b from-[#f3f3f3] to-[#dcdcdc] px-2 last:border-r-0'
                    }
                  >
                    {t}
                  </button>
                ))}
              </div>
            </div>
          </div>

          <div className="h-5 w-10 shrink-0 text-right leading-5">SPL</div>

          {/* graph */}
          <div className="relative mb-[27px] ml-[43px] mr-[21px] min-h-0 flex-1 bg-white">
            <svg
              className="absolute inset-0 size-full"
              viewBox={`${PLOT.x} ${PLOT.y} ${PLOT.w} ${PLOT.h}`}
              preserveAspectRatio="none"
            >
              <Grid color="#bebebe" strong="#808080" />
              <path d="M363.500 168.500H1898.500V952.500H363.500Z" fill="none" stroke="#bebebe" shapeRendering="crispEdges" />
              {traces.map((t) => (
                <path key={t.id} d={t.path} fill="none" stroke={t.color} strokeWidth="2" vectorEffect="non-scaling-stroke" />
              ))}
              <path d="M363 922.500H1899M1739.500 168V955" stroke="#000" shapeRendering="crispEdges" />
            </svg>
            {levels.map((l) => (
              <span key={l} className="absolute right-full mr-0.5 -translate-y-1/2 leading-4" style={top(dy(l))}>
                {l}
              </span>
            ))}
            {[20, ...freqs].filter((f) => f < 10000).map((f) => (
              <span key={f} className="absolute top-full mt-[3px] -translate-x-1/2 leading-4" style={left(Math.max(fx(f), 364))}>
                {axisText(f)}
              </span>
            ))}
            <span className="absolute -right-[16px] top-full mt-[3px] leading-4">20,6kHz</span>
            <span
              className="absolute right-full mr-px -translate-y-1/2 border border-[#1010a8] bg-white px-0.5 leading-4 text-[#1010a8]"
              style={top(923)}
            >
              31,9
            </span>
            <span
              className="absolute top-full mt-0.5 -translate-x-1/2 border border-[#1010a8] bg-white px-0.5 leading-4 text-[#1010a8]"
              style={left(1739)}
            >
              10,03k
            </span>
            <button className="absolute bottom-[3px] left-0.5 h-[22px] whitespace-nowrap rounded border border-[#bdbdbd] bg-gradient-to-b from-[#f2f2f2] to-[#d9d9d9] px-1">
              <u className="underline-offset-2">A</u>verage the responses
            </button>
          </div>

          {/* legend */}
          <div className="mx-auto mb-0.5 flex h-[27px] w-[1081px] shrink-0 items-center border border-[#cccccc] bg-white pl-[7px] pt-1">
            {traces.map((t) => (
              <LegendItem key={t.id} trace={t} />
            ))}
          </div>
        </main>
      </div>

      {/* status bar */}
      <footer className="flex h-[25px] shrink-0 items-stretch whitespace-pre border-t border-[#d8d8d8] leading-6">
        <span className="w-[83px] border-r border-[#d8d8d8] pl-[3px]">110/200MB</span>
        <span className="w-[45px] border-r border-[#d8d8d8] pl-1">48 kHz</span>
        <span className="w-[114px] border-r border-[#d8d8d8] pl-1">Int32L in, Int32L out</span>
        <span className="flex w-[269px] justify-between border-r border-[#d8d8d8] pl-1 pr-[7px] text-xs leading-6">
          <span className="text-[#8aab3c]">XXXX XXXX  XXXX XXXX</span>
          <span className="text-[#6a90cc]">0000 0000  0000 0000</span>
        </span>
        <span className="w-[98px] border-r border-[#d8d8d8] pl-1">16-bit input data</span>
        <span className="w-[209px] border-r border-[#d8d8d8] pl-1">Peak input before clipping 100 dB SPL</span>
        <span className="mr-[204px] flex-1 border-r border-[#d8d8d8]" />
      </footer>
    </div>
  );
};

export default App;
